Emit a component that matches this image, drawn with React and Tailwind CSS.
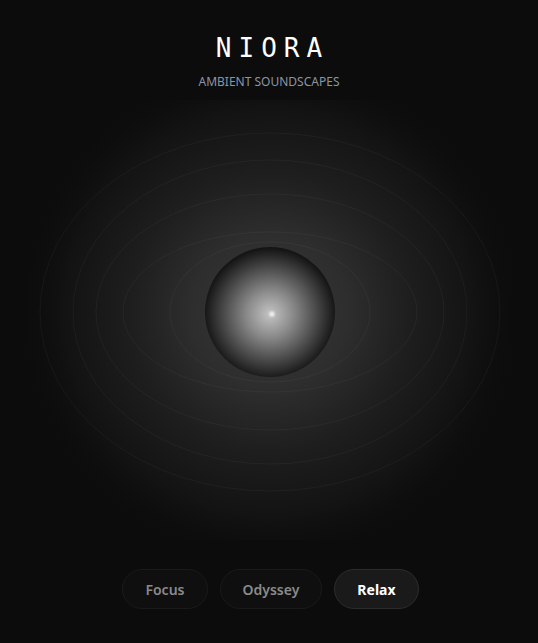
import React, { useState } from "react";

const modes = ["Focus", "Odyssey", "Relax"];

// ring sizes measured off the scene, all centred on the orb
const rings = [
  { rx: 230, ry: 179 },
  { rx: 197, ry: 152 },
  { rx: 174, ry: 118 },
  { rx: 147, ry: 80 },
  { rx: 100, ry: 70 },
];

function Scene() {
  return (
    <svg width="538" height="440" viewBox="0 0 538 440" className="block">
      <defs>
        <radialGradient id="glow" cx="270" cy="212" r="255" gradientUnits="userSpaceOnUse">
          <stop offset="0" stopColor="#383838" />
          <stop offset="0.3" stopColor="#2e2e2e" />
          <stop offset="0.55" stopColor="#1e1e1e" />
          <stop offset="0.8" stopColor="#131313" />
          <stop offset="1" stopColor="#0c0c0c" stopOpacity="0" />
        </radialGradient>
        <radialGradient id="orb" cx="270" cy="214" r="66" gradientUnits="userSpaceOnUse">
          <stop offset="0" stopColor="#c4c4c4" />
          <stop offset="0.35" stopColor="#8a8a8a" />
          <stop offset="0.7" stopColor="#4a4a4a" />
          <stop offset="0.92" stopColor="#222222" />
          <stop offset="1" stopColor="#141414" />
        </radialGradient>
        <filter id="soft">
          <feGaussianBlur stdDeviation="0.8" />
        </filter>
      </defs>
      <ellipse cx="270" cy="212" rx="269" ry="245" fill="url(#glow)" />
      {rings.map((r, i) => (
        <ellipse
          key={i}
          cx="270"
          cy="212"
          rx={r.rx}
          ry={r.ry}
          fill="none"
          stroke="#ffffff"
          strokeOpacity="0.04"
          strokeWidth="1"
        />
      ))}
      <circle cx="270" cy="212" r="65" fill="url(#orb)" />
      <circle cx="272" cy="214" r="2.6" fill="#f2f2f2" filter="url(#soft)" />
    </svg>
  );
}

export default function App() {
  const [active, setActive] = useState("Relax");

  return (
    <div className="flex h-[643px] w-full flex-col items-center overflow-hidden bg-[#0c0c0c]">
      <header className="pt-[32px] pb-[10px] text-center">
        <h1
          className="pl-[7px] text-[26px] leading-[32px] tracking-[7px] text-white"
          style={{ fontFamily: '"DejaVu Sans Mono", monospace' }}
        >
          NIORA
        </h1>
        <p
          className="mt-[10px] text-[12px] leading-[16px] text-[#8b95a5]"
          style={{ fontFamily: '"Noto Sans", sans-serif' }}
        >
          AMBIENT SOUNDSCAPES
        </p>
      </header>

      <Scene />

      <nav
        className="mt-[29px] flex items-center gap-3 pl-[3px]"
        style={{ fontFamily: '"Noto Sans", sans-serif' }}
      >
        {modes.map((m) => (
          <button
            key={m}
            onClick={() => setActive(m)}
            className={
              active === m
                ? "h-[40px] rounded-full border border-[#2c2c2c] bg-[#1a1a1a] px-[22px] text-[14px] font-bold text-white"
                : "h-[40px] rounded-full border border-[#1a1a1a] bg-[#0f0f0f] px-[22px] text-[14px] font-semibold text-[#8a8a8a]"
            }
          >
            {m}
          </button>
        ))}
      </nav>
    </div>
  );
}
